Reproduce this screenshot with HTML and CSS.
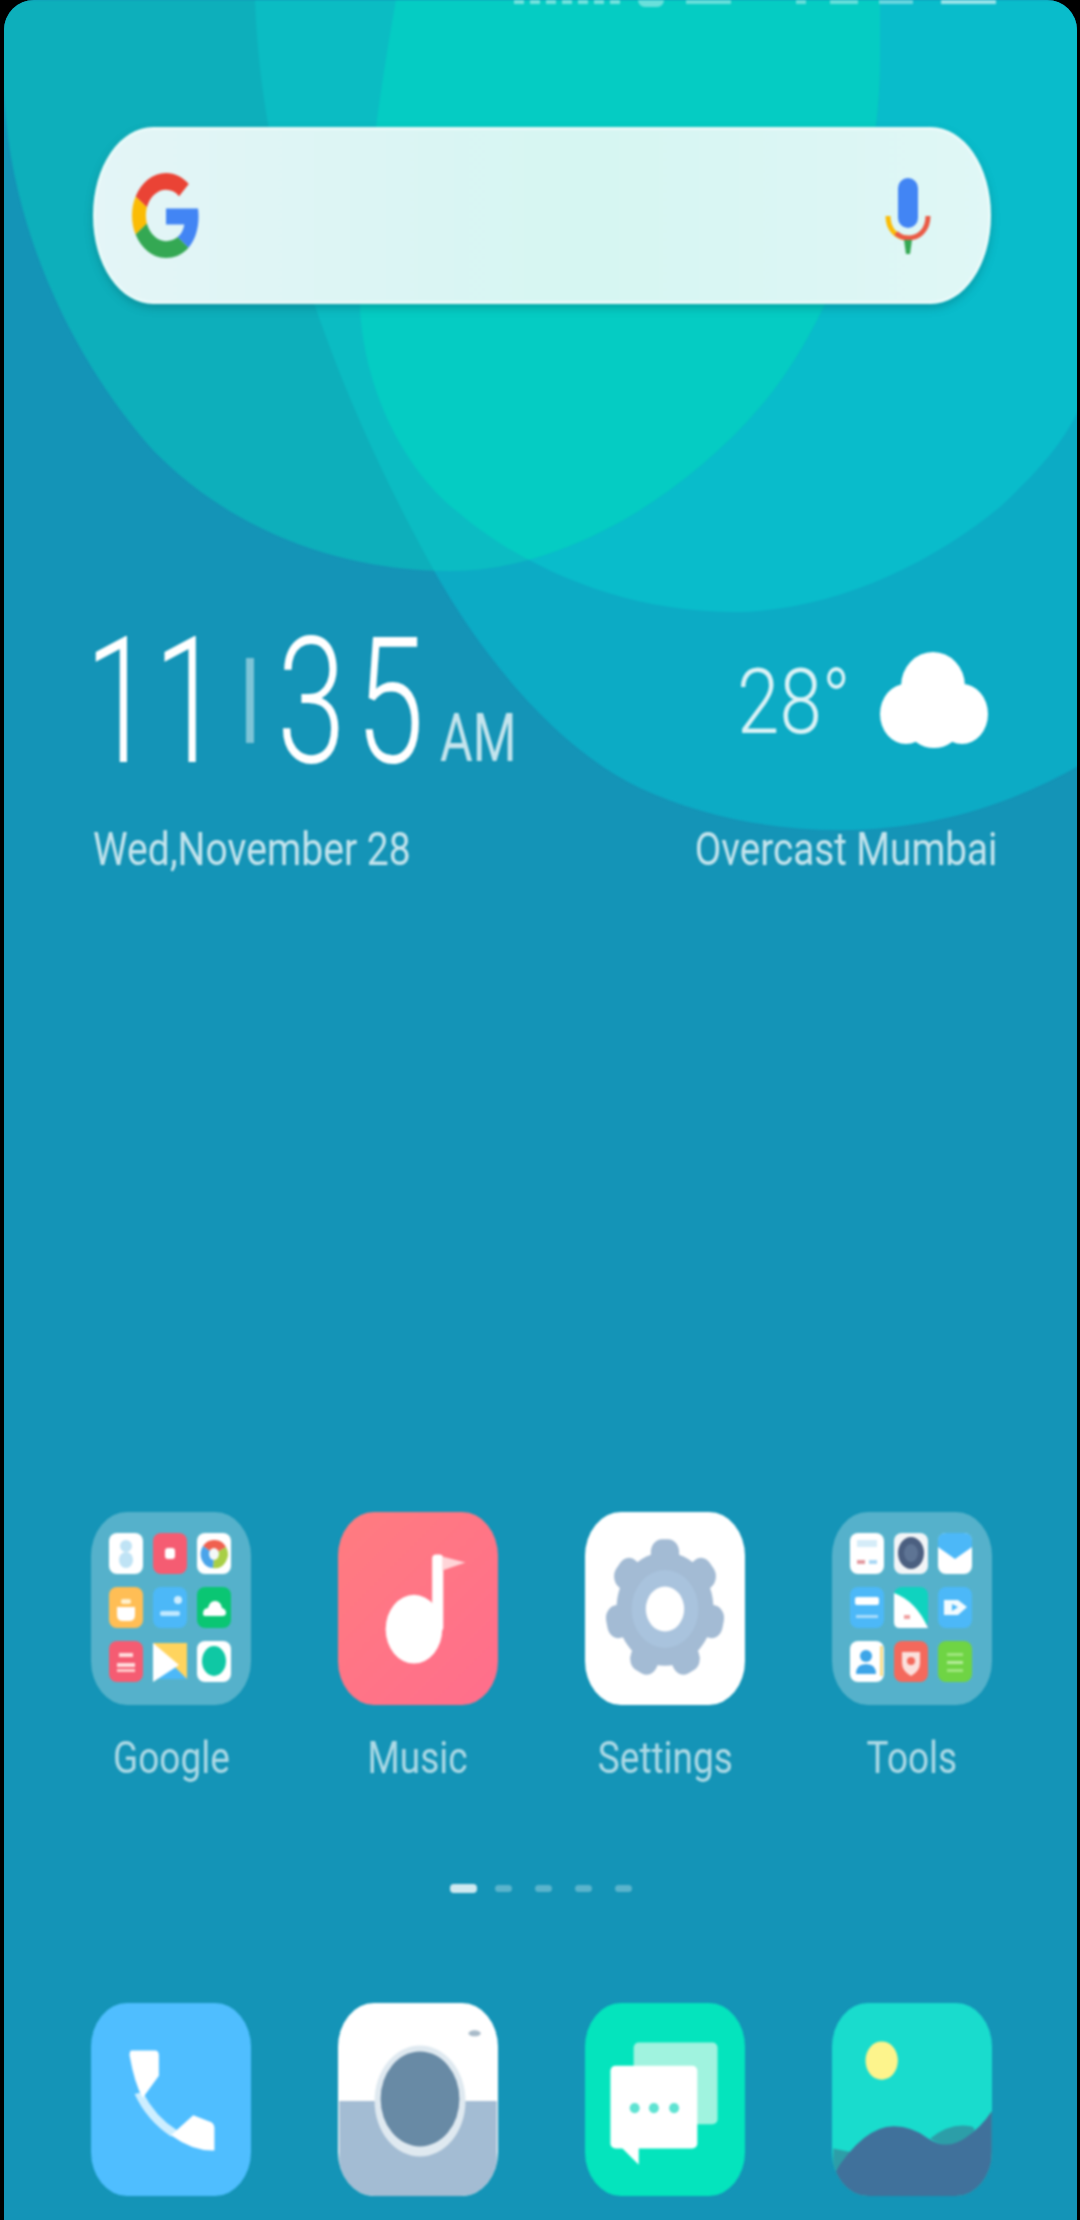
FILE: index.html
```html
<!DOCTYPE html>
<html lang="en">
<head>
    <meta charset="UTF-8">
    <title>Home Screen</title>
    <link rel="stylesheet" href="styles.css">
</head>
<body>
    <div class="screen">
        <!-- wallpaper: three overlapping blobs, colours change where they overlap -->
        <svg class="wallpaper" viewBox="0 0 1080 2220">
            <defs>
                <path id="blob-a" d="M0 0V40C2 80 4 100 6 120C20 260 90 380 153 450C230 530 340 571 450 571C560 571 680 500 760 407C830 325 880 190 880 60V0Z"/>
                <path id="blob-b" d="M396 0C378 100 362 220 360 310C366 400 410 475 459 513C520 565 620 612 733 612C830 612 930 565 1000 507C1040 470 1065 440 1080 407V0Z"/>
                <path id="blob-c" d="M255 0C262 200 340 400 432 567C475 645 550 745 640 788C700 816 770 830 840 830C930 830 1010 805 1080 765V0Z"/>
                <clipPath id="clip-a"><use href="#blob-a"/></clipPath>
            </defs>
            <use href="#blob-c" fill="#0cabc5"/>
            <use href="#blob-b" fill="#09bccb"/>
            <use href="#blob-a" fill="#0dafbb"/>
            <g clip-path="url(#clip-a)">
                <use href="#blob-c" fill="#0bbcc3"/>
                <use href="#blob-b" fill="#05ccc3"/>
            </g>
        </svg>

        <div class="content">
            <div class="status-bar">
                <span class="blip blip-signal"></span>
                <span class="blip blip-round"></span>
                <span class="blip blip-wide"></span>
                <span class="blip blip-tiny"></span>
                <span class="blip blip-mid"></span>
                <span class="blip blip-mid2"></span>
                <span class="blip blip-battery"></span>
            </div>

            <div class="search-bar">
                <svg class="google-g" viewBox="0 0 48 48" preserveAspectRatio="none">
                    <path fill="#EA4335" d="M24 9.5c3.54 0 6.71 1.22 9.21 3.6l6.85-6.85C35.9 2.38 30.47 0 24 0 14.62 0 6.51 5.38 2.56 13.22l7.98 6.19C12.43 13.72 17.74 9.5 24 9.5z"/>
                    <path fill="#4285F4" d="M46.98 24.55c0-1.57-.15-3.09-.38-4.55H24v9.02h12.94c-.58 2.96-2.26 5.48-4.78 7.18l7.73 6c4.51-4.18 7.09-10.36 7.09-17.65z"/>
                    <path fill="#FBBC05" d="M10.53 28.59c-.48-1.45-.76-2.99-.76-4.59s.27-3.14.76-4.59l-7.98-6.19C.92 16.46 0 20.12 0 24c0 3.88.92 7.54 2.56 10.78l7.97-6.19z"/>
                    <path fill="#34A853" d="M24 48c6.48 0 11.93-2.13 15.89-5.81l-7.73-6c-2.15 1.45-4.92 2.3-8.16 2.3-6.26 0-11.57-4.22-13.47-9.91l-7.98 6.19C6.51 42.62 14.62 48 24 48z"/>
                </svg>
                <svg class="mic" viewBox="0 0 46 76">
                    <rect x="13" y="0" width="20" height="50" rx="10" fill="#4285f4"/>
                    <path d="M3 38C3 52 12 60 23 60" fill="none" stroke="#fbbc05" stroke-width="5"/>
                    <path d="M43 38C43 52 34 60 23 60C18 60 14 58 11 55" fill="none" stroke="#ea5a45" stroke-width="5"/>
                    <path d="M19 62H27L25 76H21Z" fill="#34a853"/>
                </svg>
            </div>

            <div class="clock-row">
                <div class="clock">
                    <span class="clock-num clock-hours">11</span>
                    <span class="clock-sep"></span>
                    <span class="clock-num clock-mins">35</span>
                    <span class="clock-ampm">AM</span>
                </div>
                <div class="weather">
                    <span class="temp">28°</span>
                    <svg class="cloud" viewBox="0 0 108 96">
                        <ellipse cx="53" cy="34" rx="32" ry="34" fill="#fff"/>
                        <ellipse cx="26" cy="62" rx="26" ry="30" fill="#fff"/>
                        <ellipse cx="82" cy="62" rx="26" ry="30" fill="#fff"/>
                        <ellipse cx="54" cy="78" rx="24" ry="18" fill="#fff"/>
                    </svg>
                </div>
            </div>

            <div class="date-row">
                <span class="date">Wed,November 28</span>
                <span class="place">Overcast Mumbai</span>
            </div>

            <div class="app-grid">
                <div class="app">
                    <div class="icon folder">
                        <svg class="mini" viewBox="0 0 34 41"><rect width="34" height="41" rx="8" fill="#fff"/><ellipse cx="17" cy="13" rx="6" ry="6" fill="#bfe3f5"/><ellipse cx="17" cy="27" rx="7" ry="8" fill="#bfe3f5"/></svg>
                        <svg class="mini" viewBox="0 0 34 41"><rect width="34" height="41" rx="8" fill="#f55c72"/><rect x="12" y="15" width="10" height="11" rx="3" fill="#fff"/></svg>
                        <svg class="mini" viewBox="0 0 34 41"><rect width="34" height="41" rx="8" fill="#fff"/><path d="M17 7A13 14 0 0 1 29 14L17 21L6 13A13 14 0 0 1 17 7Z" fill="#f0604f"/><path d="M29 14A13 14 0 0 1 16 35L17 21Z" fill="#a8cf45"/><path d="M6 13A13 14 0 0 0 16 35L17 21Z" fill="#4aa4ea"/><ellipse cx="17" cy="21" rx="5" ry="6" fill="#f4f8f8"/></svg>
                        <svg class="mini" viewBox="0 0 34 41"><rect width="34" height="41" rx="8" fill="#ffbe55"/><path d="M8 20H26V28Q26 34 20 34H14Q8 34 8 28Z" fill="#fff"/><rect x="12" y="12" width="10" height="5" rx="2" fill="#fff0cc"/></svg>
                        <svg class="mini" viewBox="0 0 34 41"><rect width="34" height="41" rx="8" fill="#4cb8f8"/><circle cx="25" cy="13" r="4" fill="#cfeeff"/><rect x="7" y="24" width="20" height="5" rx="2" fill="#bfe8ff"/></svg>
                        <svg class="mini" viewBox="0 0 34 41"><rect width="34" height="41" rx="8" fill="#0ac673"/><path d="M6 27Q6 21 11 21Q13 13 19 14Q24 15 25 21Q29 22 29 26Q29 29 25 29H9Q6 29 6 27Z" fill="#fff"/></svg>
                        <svg class="mini" viewBox="0 0 34 41"><rect width="34" height="41" rx="8" fill="#f55c72"/><rect x="10" y="12" width="14" height="4" fill="#fdd"/><rect x="8" y="22" width="18" height="4" fill="#fdd"/><rect x="8" y="28" width="18" height="3" fill="#fcc"/></svg>
                        <svg class="mini" viewBox="0 0 34 41"><path d="M0 2H34V38H0Z" fill="#ffd45e"/><path d="M14 18L34 38H0Z" fill="#4cb8f8"/><path d="M0 2L26 24L0 41Z" fill="#fff"/></svg>
                        <svg class="mini" viewBox="0 0 34 41"><rect width="34" height="41" rx="8" fill="#fff"/><ellipse cx="17" cy="20" rx="12" ry="15" fill="#0fc8a4"/></svg>
                    </div>
                    <div class="app-label"><span>Google</span></div>
                </div>

                <div class="app">
                    <div class="icon icon-music">
                        <svg class="glyph" viewBox="0 0 156 191">
                            <ellipse cx="74" cy="116" rx="28" ry="34" fill="#fff"/>
                            <rect x="92" y="42" width="11" height="76" rx="4" fill="#fff"/>
                            <path d="M102 44L125 50L102 58Z" fill="#ffd4d8"/>
                        </svg>
                    </div>
                    <div class="app-label"><span>Music</span></div>
                </div>

                <div class="app">
                    <div class="icon icon-settings">
                        <svg class="glyph" viewBox="0 0 158 191">
                            <g transform="translate(79 96) scale(1 1.17)" fill="#a3bbd4">
                                <circle r="48"/>
                                <rect x="-14" y="-59" width="28" height="24" rx="11"/>
                                <rect x="-14" y="-59" width="28" height="24" rx="11" transform="rotate(51.4)"/>
                                <rect x="-14" y="-59" width="28" height="24" rx="11" transform="rotate(102.9)"/>
                                <rect x="-14" y="-59" width="28" height="24" rx="11" transform="rotate(154.3)"/>
                                <rect x="-14" y="-59" width="28" height="24" rx="11" transform="rotate(205.7)"/>
                                <rect x="-14" y="-59" width="28" height="24" rx="11" transform="rotate(257.1)"/>
                                <rect x="-14" y="-59" width="28" height="24" rx="11" transform="rotate(308.6)"/>
                                <circle r="33" fill="#a9c3dd"/>
                                <circle r="19" fill="#fff"/>
                            </g>
                        </svg>
                    </div>
                    <div class="app-label"><span>Settings</span></div>
                </div>

                <div class="app">
                    <div class="icon folder">
                        <svg class="mini" viewBox="0 0 34 41"><rect width="34" height="41" rx="8" fill="#fff"/><rect x="7" y="7" width="20" height="7" fill="#d5ecf8"/><rect x="7" y="27" width="8" height="4" fill="#e39aa0"/><rect x="19" y="27" width="8" height="4" fill="#a9d8f4"/></svg>
                        <svg class="mini" viewBox="0 0 34 41"><rect width="34" height="41" rx="8" fill="#f2f5f7"/><ellipse cx="17" cy="20" rx="13" ry="16" fill="#4b5f80"/><ellipse cx="17" cy="20" rx="7" ry="9" fill="#5e7494"/></svg>
                        <svg class="mini" viewBox="0 0 34 41"><rect width="34" height="41" rx="8" fill="#fff"/><path d="M0 8Q0 0 8 0H26Q34 0 34 8V14L17 26L0 14Z" fill="#4cb8f8"/></svg>
                        <svg class="mini" viewBox="0 0 34 41"><rect width="34" height="41" rx="8" fill="#4cb8f8"/><rect x="5" y="10" width="24" height="8" rx="2" fill="#fff"/><rect x="6" y="28" width="22" height="3" fill="#a9dcfb"/></svg>
                        <svg class="mini" viewBox="0 0 34 41"><rect width="34" height="41" rx="8" fill="#0fd3bf"/><path d="M0 6Q22 14 34 41H6Q0 41 0 35Z" fill="#fff"/><rect x="10" y="28" width="6" height="4" fill="#f0a0a0"/></svg>
                        <svg class="mini" viewBox="0 0 34 41"><rect width="34" height="41" rx="8" fill="#4cb8f8"/><path d="M6 13H20L29 20L20 28H6Z" fill="#f2fbff"/><path d="M14 17L20 20L14 24Z" fill="#4cb8f8"/></svg>
                        <svg class="mini" viewBox="0 0 34 41"><rect width="34" height="41" rx="8" fill="#fff"/><circle cx="16" cy="15" r="6" fill="#3da5e8"/><path d="M6 33Q6 23 16 23Q26 23 26 33Z" fill="#3da5e8"/><rect x="30" y="5" width="3" height="30" fill="#f5dc8a"/></svg>
                        <svg class="mini" viewBox="0 0 34 41"><rect width="34" height="41" rx="8" fill="#f4695c"/><path d="M8 11H26V22Q26 30 17 35Q8 30 8 22Z" fill="#fbe0dc"/><circle cx="17" cy="20" r="4" fill="#f4695c"/></svg>
                        <svg class="mini" viewBox="0 0 34 41"><rect width="34" height="41" rx="8" fill="#6fd444"/><rect x="9" y="12" width="16" height="3" fill="#9fe67e"/><rect x="9" y="20" width="16" height="3" fill="#b5ec9a"/><rect x="9" y="28" width="16" height="3" fill="#9fe67e"/></svg>
                    </div>
                    <div class="app-label"><span>Tools</span></div>
                </div>
            </div>

            <div class="page-dots">
                <span class="dot dot-active"></span>
                <span class="dot"></span>
                <span class="dot"></span>
                <span class="dot"></span>
                <span class="dot"></span>
            </div>

            <div class="dock">
                <div class="icon icon-phone">
                    <svg class="glyph" viewBox="0 0 156 191">
                        <path d="M50 88Q62 112 84 126L78 132Q54 116 42 90Z" fill="#cdeeff"/>
                        <path d="M39 47H62Q66 47 66 52V72L50 94Q42 80 37 52Q37 47 39 47Z" fill="#fff"/>
                        <path d="M100 111L118 118Q121 120 121 124V146Q100 147 78 131Z" fill="#fff"/>
                    </svg>
                </div>
                <div class="icon icon-camera">
                    <svg class="glyph" viewBox="0 0 156 191">
                        <rect y="97" width="156" height="94" fill="#a3bcd3"/>
                        <ellipse cx="80" cy="97" rx="45" ry="55" fill="#dfe9f0"/>
                        <ellipse cx="80" cy="95" rx="39" ry="47" fill="#688aa5"/>
                        <ellipse cx="134" cy="30" rx="6" ry="3" fill="#a9bbc9"/>
                    </svg>
                </div>
                <div class="icon icon-message">
                    <svg class="glyph" viewBox="0 0 156 191">
                        <rect x="47" y="39" width="83" height="81" rx="5" fill="#a0f3df"/>
                        <rect x="24" y="62" width="86" height="82" rx="5" fill="#fff"/>
                        <path d="M34 142L52 160V142Z" fill="#fff"/>
                        <circle cx="48" cy="104" r="5" fill="#5fe3d2"/>
                        <circle cx="67" cy="104" r="5" fill="#5fe3d2"/>
                        <circle cx="87" cy="104" r="5" fill="#5fe3d2"/>
                    </svg>
                </div>
                <div class="icon icon-gallery">
                    <svg class="glyph" viewBox="0 0 156 191">
                        <ellipse cx="48" cy="57" rx="16" ry="19" fill="#fdf48c"/>
                        <path d="M96 134Q116 118 136 122Q146 124 130 136Q112 146 96 134Z" fill="#2c9ea8"/>
                        <path d="M0 144L20 148L0 168Z" fill="#2c9ea8"/>
                        <path d="M0 191V170Q30 122 60 122Q78 122 94 134Q112 146 130 134Q146 124 157 107V191Z" fill="#40719b"/>
                    </svg>
                </div>
            </div>
        </div>
    </div>
</body>
</html>
```

FILE: styles.css
```css
body {
    margin: 0;
    background-color: #000;
    font-family: Roboto, "Liberation Sans", sans-serif;
    color: #fff;
}

.screen {
    position: relative;
    width: 1073px;
    height: 2220px;
    margin-left: 4px;
    overflow: hidden;
    background-color: #1494b7;
    border-radius: 30px 30px 0 0;
}

.wallpaper {
    position: absolute;
    top: 0;
    left: -4px;
    width: 1080px;
    height: 2220px;
    filter: blur(1px);
}

/* the source shot is a blown up low res image, so everything is a bit soft */
.content {
    position: relative;
    display: flex;
    flex-direction: column;
    height: 2220px;
    box-sizing: border-box;
    padding: 0 85px 24px 87px;
    filter: blur(1.3px);
}

.status-bar {
    position: relative;
    height: 8px;
    margin: 0 -85px 0 0;
    display: flex;
    align-items: flex-start;
    padding-left: 423px;
}

.blip {
    height: 4px;
    background-color: rgba(255, 255, 255, 0.4);
}

.blip-signal {
    width: 106px;
    background: repeating-linear-gradient(90deg, rgba(255, 255, 255, 0.45) 0 10px, transparent 10px 16px);
}
.blip-round { width: 26px; height: 7px; margin-left: 18px; border-radius: 0 0 13px 13px; }
.blip-wide { width: 45px; margin-left: 22px; }
.blip-tiny { width: 10px; margin-left: 65px; }
.blip-mid { width: 28px; margin-left: 24px; }
.blip-mid2 { width: 34px; margin-left: 21px; }
.blip-battery { width: 55px; margin-left: 28px; background-color: rgba(255, 255, 255, 0.6); }

.search-bar {
    display: flex;
    align-items: center;
    justify-content: space-between;
    height: 177px;
    margin: 119px 1px 0 2px;
    padding: 0 57px 0 36px;
    background: linear-gradient(90deg, #e4f5f7, #d6f6f2 55%, #e0f7f6);
    border: 3px solid #eafaf9;
    box-sizing: border-box;
    border-radius: 60px / 88px;
    box-shadow: 0 4px 8px rgba(0, 90, 100, 0.35);
}

.google-g {
    width: 68px;
    height: 85px;
}

.mic {
    width: 46px;
    height: 76px;
}

.clock-row {
    display: flex;
    justify-content: space-between;
    height: 130px;
    margin-top: 333px;
}

.clock {
    display: flex;
    line-height: 130px;
}

.clock-num {
    font-size: 177px;
    font-weight: 350;
    transform: scaleX(0.7);
    transform-origin: left top;
    white-space: nowrap;
}

.clock-hours {
    width: 134px;
    margin-left: -6px;
}

.clock-sep {
    width: 8px;
    height: 85px;
    margin: 21px 0 0 27px;
    background-color: rgba(255, 255, 255, 0.45);
}

.clock-mins {
    width: 163px;
    margin-left: 23px;
    letter-spacing: 14px;
}

.clock-ampm {
    margin-top: 37px;
    font-size: 66px;
    font-weight: 400;
    line-height: 130px;
    height: 93px;
    opacity: 0.75;
    transform: scaleX(0.76);
    transform-origin: left top;
}

.weather {
    display: flex;
    align-items: flex-start;
    margin-right: 4px;
}

.temp {
    width: 112px;
    margin: 20px 0 0 0;
    font-size: 91px;
    font-weight: 300;
    line-height: 90px;
    opacity: 0.85;
    white-space: nowrap;
    transform: scaleX(0.84);
    transform-origin: left top;
}

.cloud {
    width: 108px;
    height: 96px;
    margin: 15px 0 0 31px;
}

.date-row {
    display: flex;
    justify-content: space-between;
    margin: 59px -5px 0 2px;
    font-size: 46px;
    font-weight: 400;
    line-height: 46px;
    opacity: 0.75;
}

.date {
    white-space: nowrap;
    transform: scaleX(0.85);
    transform-origin: left center;
}

.place {
    white-space: nowrap;
    transform: scaleX(0.84);
    transform-origin: right center;
}

.app-grid {
    display: flex;
    justify-content: space-between;
    margin-top: auto;
}

.app {
    width: 160px;
}

.icon {
    width: 160px;
    height: 193px;
    overflow: hidden;
    border-radius: 36px / 44px;
}

.glyph {
    display: block;
    width: 100%;
    height: 100%;
}

.folder {
    display: grid;
    grid-template-columns: repeat(3, 34px);
    grid-template-rows: repeat(3, 41px);
    gap: 13px 10px;
    padding: 21px 18px;
    box-sizing: border-box;
    background-color: rgba(255, 255, 255, 0.28);
}

.mini {
    display: block;
    width: 34px;
    height: 41px;
}

.icon-music {
    background: linear-gradient(135deg, #ff7c80, #ff6e8c);
}

.icon-settings {
    background-color: #fff;
}

.icon-phone {
    background-color: #4fbeff;
}

.icon-camera {
    background-color: #fff;
}

.icon-message {
    background-color: #04e4bd;
}

.icon-gallery {
    background-color: #19dccd;
}

.app-label {
    margin-top: 28px;
    text-align: center;
    font-size: 44px;
    line-height: 50px;
    opacity: 0.65;
}

.app-label span {
    display: inline-block;
    margin: 0 -20px;
    transform: scaleX(0.84);
}

.page-dots {
    display: flex;
    align-items: center;
    height: 9px;
    margin: 101px 0 0 359px;
    gap: 23px;
}

.dot {
    width: 17px;
    height: 7px;
    border-radius: 4px;
    background-color: rgba(255, 255, 255, 0.3);
}

.dot-active {
    width: 27px;
    height: 9px;
    margin-right: -5px;
    background-color: rgba(255, 255, 255, 0.8);
}

.dock {
    display: flex;
    justify-content: space-between;
    margin-top: 110px;
}
```
